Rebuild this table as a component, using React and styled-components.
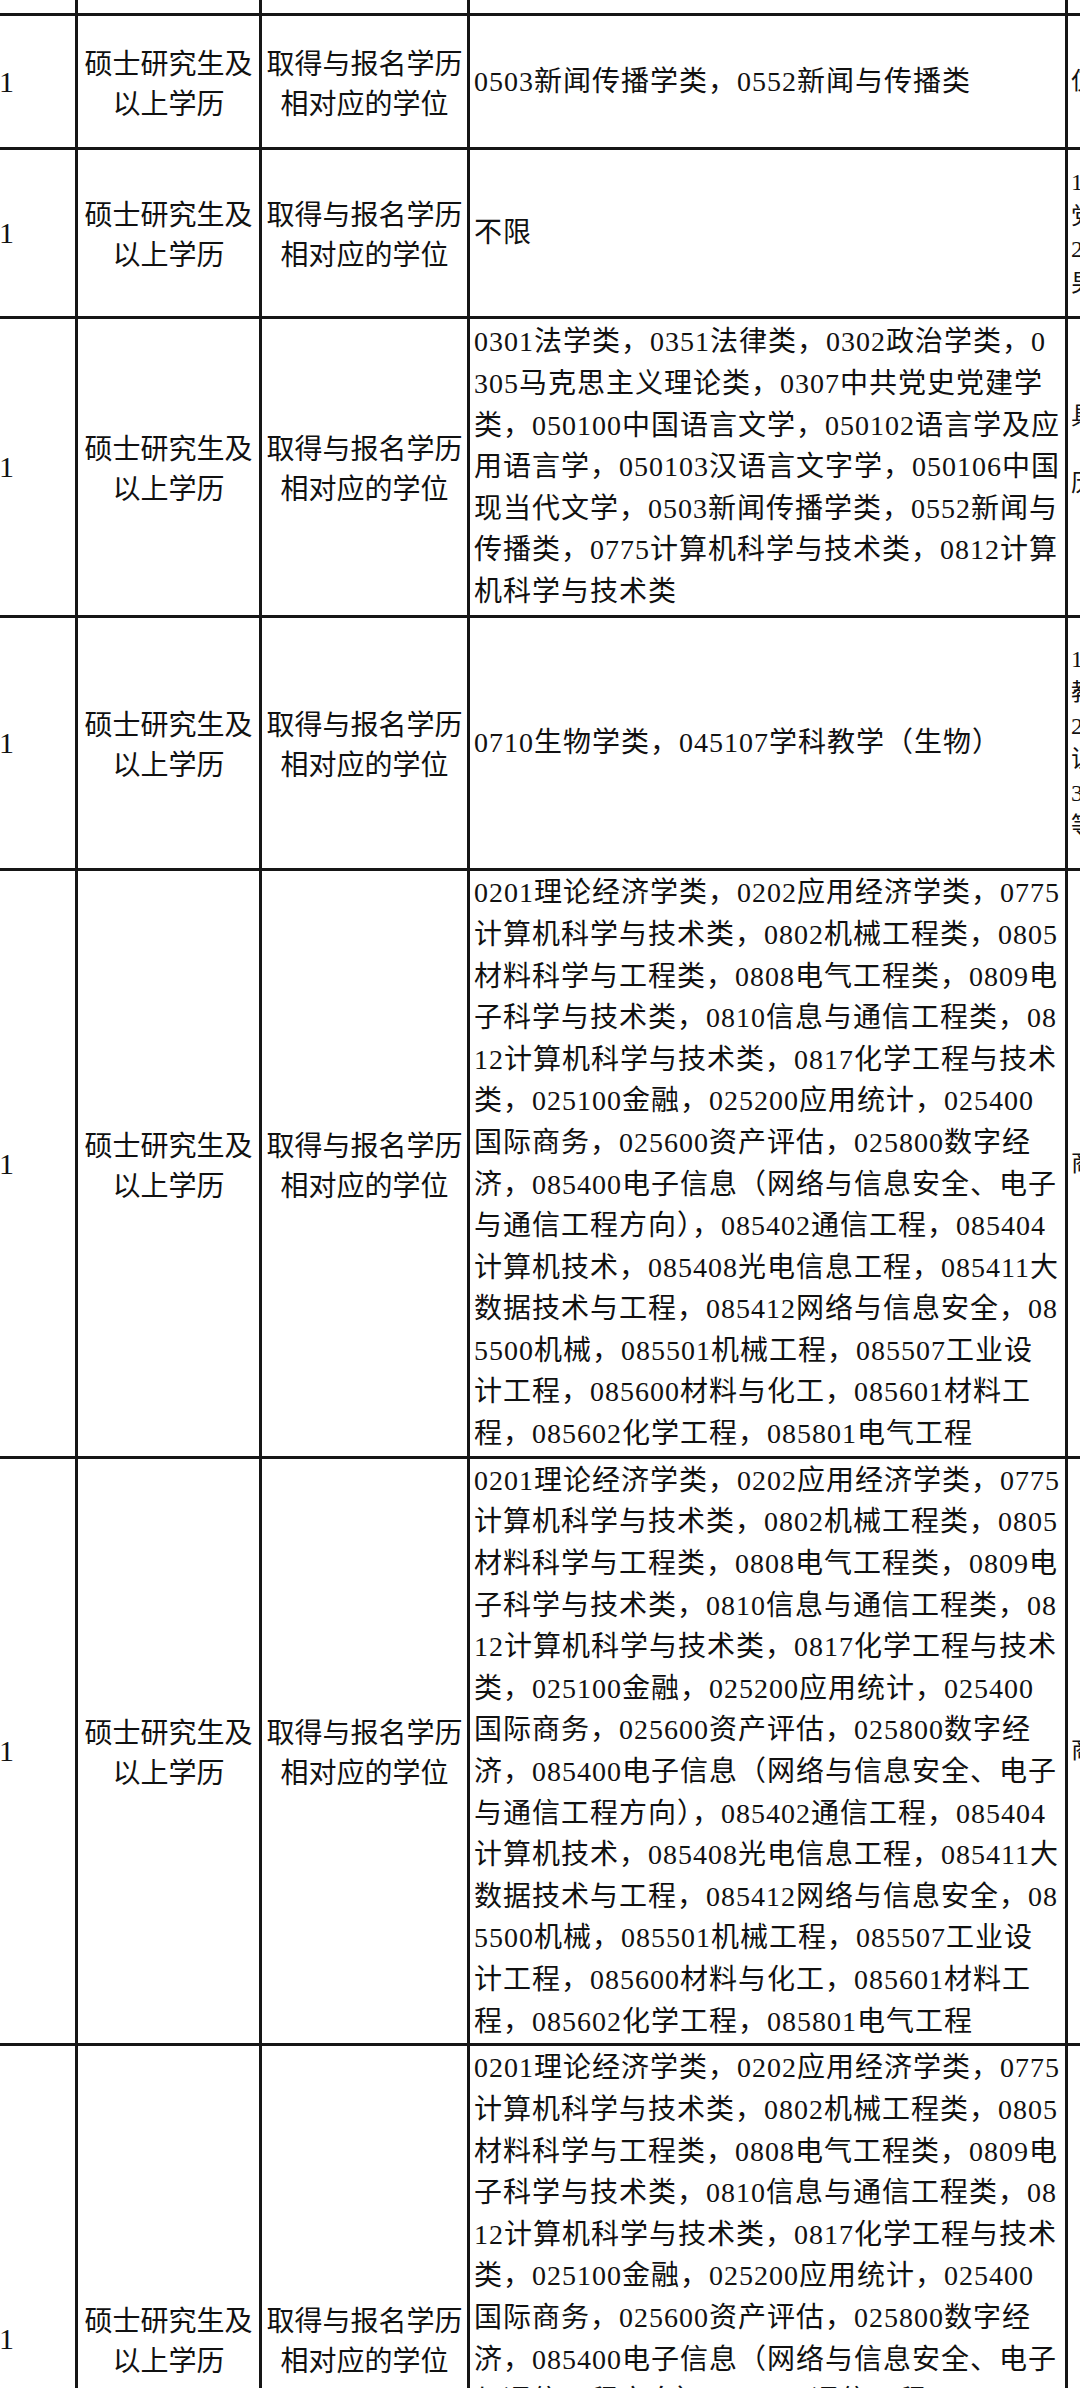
import React from "react";
import styled, { createGlobalStyle } from "styled-components";

const GlobalStyle = createGlobalStyle`
  html, body {
    margin: 0;
    padding: 0;
    background: #ffffff;
    overflow: hidden;
  }
`;

const majorEng = [
  "0201理论经济学类，0202应用经济学类，0775",
  "计算机科学与技术类，0802机械工程类，0805",
  "材料科学与工程类，0808电气工程类，0809电",
  "子科学与技术类，0810信息与通信工程类，08",
  "12计算机科学与技术类，0817化学工程与技术",
  "类，025100金融，025200应用统计，025400",
  "国际商务，025600资产评估，025800数字经",
  "济，085400电子信息（网络与信息安全、电子",
  "与通信工程方向），085402通信工程，085404",
  "计算机技术，085408光电信息工程，085411大",
  "数据技术与工程，085412网络与信息安全，08",
  "5500机械，085501机械工程，085507工业设",
  "计工程，085600材料与化工，085601材料工",
  "程，085602化学工程，085801电气工程",
];

const rows = [
  {
    height: 134,
    major: ["0503新闻传播学类，0552新闻与传播类"],
    note: ["仅限应届毕业生"],
  },
  {
    height: 169,
    major: ["不限"],
    note: ["1.中共党员（含预备", "党员）；", "2.需经常值夜班，适合", "男性"],
  },
  {
    height: 299,
    major: [
      "0301法学类，0351法律类，0302政治学类，0",
      "305马克思主义理论类，0307中共党史党建学",
      "类，050100中国语言文学，050102语言学及应",
      "用语言学，050103汉语言文字学，050106中国",
      "现当代文学，0503新闻传播学类，0552新闻与",
      "传播类，0775计算机科学与技术类，0812计算",
      "机科学与技术类",
    ],
    note: ["具有相关工作经", "", "历者优先", ""],
  },
  {
    height: 253,
    major: ["0710生物学类，045107学科教学（生物）"],
    note: ["1.具有高级中学", "教师资格证；", "2.具有相应学科", "证书；", "3.具有一定的", "等级证书"],
  },
  { height: 588, major: majorEng, note: ["商务相关岗位"] },
  { height: 587, major: majorEng, note: ["商务相关岗位"] },
  { height: 588, major: majorEng, note: [] },
];

const App = () => {
  return (
    <>
      <GlobalStyle />
      <Viewport>
        <Sheet>
          <Row $h={16}>
            <Cell />
            <Cell />
            <Cell />
            <Cell />
            <Cell />
          </Row>
          {rows.map((row, i) => (
            <Row key={i} $h={row.height}>
              <NumCell>1</NumCell>
              <CenterCell>
                <div>
                  <Line>硕士研究生及</Line>
                  <Line>以上学历</Line>
                </div>
              </CenterCell>
              <CenterCell>
                <div>
                  <Line>取得与报名学历</Line>
                  <Line>相对应的学位</Line>
                </div>
              </CenterCell>
              <MajorCell>
                <div>
                  {row.major.map((l, j) => (
                    <Line key={j}>{l}</Line>
                  ))}
                </div>
              </MajorCell>
              <NoteCell>
                <div>
                  {row.note.map((l, j) => (
                    <Line key={j}>{l || "\u00a0"}</Line>
                  ))}
                </div>
              </NoteCell>
            </Row>
          ))}
        </Sheet>
      </Viewport>
    </>
  );
};

const Viewport = styled.div`
  width: 1080px;
  height: 2388px;
  overflow: hidden;
  background: #ffffff;
`;

const Sheet = styled.div`
  margin-left: -72px;
  width: 1540px;
  display: flex;
  flex-direction: column;
`;

const Row = styled.div`
  display: grid;
  grid-template-columns: 150px 184px 208px 598px 400px;
  height: ${(p) => p.$h}px;
  flex: none;
`;

const Cell = styled.div`
  box-sizing: border-box;
  border-right: 3px solid #161616;
  border-bottom: 3px solid #161616;
  display: flex;
  align-items: center;
  overflow: hidden;
  color: #111111;
`;

const NumCell = styled(Cell)`
  justify-content: center;
  padding-left: 10px;
  font-family: "Liberation Serif", "Noto Sans CJK SC", serif;
  font-size: 30px;
`;

const CenterCell = styled(Cell)`
  justify-content: center;
  text-align: center;
  font-family: "Noto Sans CJK SC", sans-serif;
  font-size: 28px;
  line-height: 40px;
`;

const MajorCell = styled(Cell)`
  justify-content: flex-start;
  padding-left: 4px;
  font-family: "Liberation Serif", "Noto Sans CJK SC", serif;
  font-size: 28px;
  letter-spacing: 1px;
  line-height: 41.6px;
`;

const NoteCell = styled(Cell)`
  justify-content: flex-start;
  padding-left: 3px;
  font-family: "Liberation Serif", "Noto Sans CJK SC", serif;
  font-size: 24px;
  line-height: 33.5px;
`;

const Line = styled.div`
  white-space: nowrap;
`;

export default App;
